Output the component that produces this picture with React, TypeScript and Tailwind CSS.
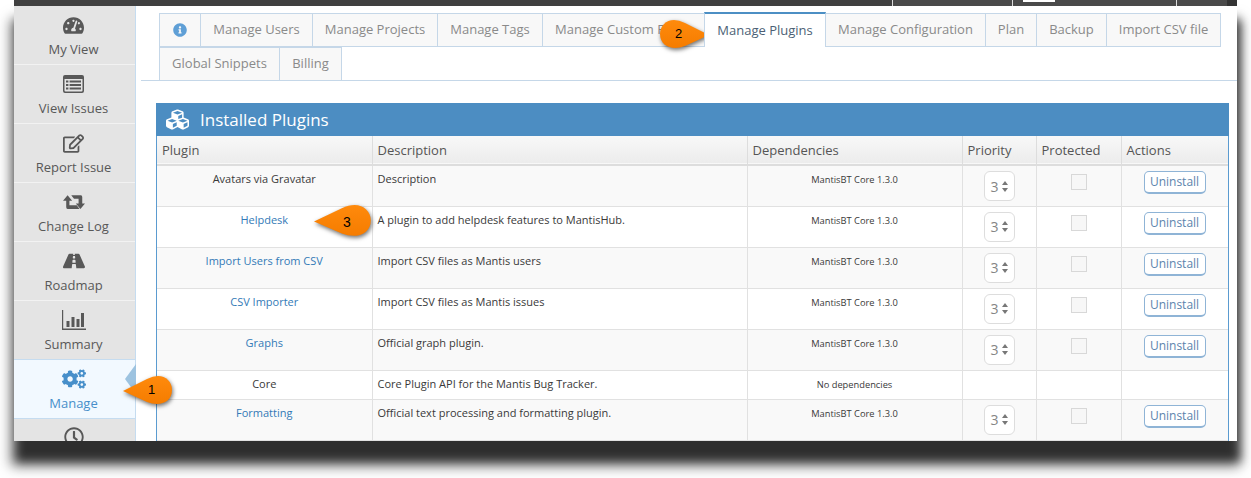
import { FaTachometerAlt, FaRegEdit, FaRoad, FaCogs, FaRegClock, FaInfoCircle, FaCubes } from "react-icons/fa";
import type { ReactNode } from "react";

const navItems: { label: string; icon: ReactNode; active?: boolean }[] = [
  { label: "My View", icon: <FaTachometerAlt className="w-[21px] h-[21px]" /> },
  {
    label: "View Issues",
    icon: (
      <svg viewBox="0 0 21 18" className="w-[21px] h-[18px]" fill="currentColor">
        <path
          fillRule="evenodd"
          d="M2 0h17a2 2 0 0 1 2 2v14a2 2 0 0 1-2 2H2a2 2 0 0 1-2-2V2a2 2 0 0 1 2-2zM1.5 4v11.5a1 1 0 0 0 1 1h16a1 1 0 0 0 1-1V4z"
        />
        <path d="M3 5.5h2.4v2H3zM6.6 5.5H18v2H6.6zM3 9h2.4v2H3zM6.6 9H18v2H6.6zM3 12.5h2.4v2H3zM6.6 12.5H18v2H6.6z" />
      </svg>
    ),
  },
  { label: "Report Issue", icon: <FaRegEdit className="w-[21px] h-[21px]" /> },
  {
    label: "Change Log",
    icon: (
      <svg viewBox="0 0 24 15" className="w-[22px] h-[14px]" fill="currentColor">
        <path d="M5 0l5 6H7v5h8l3 4H5q-1.500 0-1.500-2V6H0z" />
        <path d="M9 0h10.500Q21 0 21 2v7h3l-5 6-5-6h3V4h-5z" />
      </svg>
    ),
  },
  { label: "Roadmap", icon: <FaRoad className="w-[22px] h-[22px]" /> },
  {
    label: "Summary",
    icon: (
      <svg viewBox="0 0 24 20" className="w-[24px] h-[20px]" fill="currentColor">
        <path d="M0 0h1.2v18.6H24V20H0z" />
        <rect x="4.5" y="11" width="3" height="6" />
        <rect x="9.5" y="7" width="3" height="10" />
        <rect x="14.5" y="9" width="3" height="8" />
        <rect x="19" y="3" width="3" height="14" />
      </svg>
    ),
  },
  { label: "Manage", icon: <FaCogs className="w-[24px] h-[24px]" />, active: true },
];

const row1Tabs = ["Manage Users", "Manage Projects", "Manage Tags", "Manage Custom Fields"];
const row1After = ["Manage Configuration", "Plan", "Backup", "Import CSV file"];

const plugins = [
  { name: "Avatars via Gravatar", desc: "Description", deps: "MantisBT Core 1.3.0", link: false, h: "h-[41px]", ctrl: true },
  { name: "Helpdesk", desc: "A plugin to add helpdesk features to MantisHub.", deps: "MantisBT Core 1.3.0", link: true, h: "h-[41px]", ctrl: true },
  { name: "Import Users from CSV", desc: "Import CSV files as Mantis users", deps: "MantisBT Core 1.3.0", link: true, h: "h-[41px]", ctrl: true },
  { name: "CSV Importer", desc: "Import CSV files as Mantis issues", deps: "MantisBT Core 1.3.0", link: true, h: "h-[41px]", ctrl: true },
  { name: "Graphs", desc: "Official graph plugin.", deps: "MantisBT Core 1.3.0", link: true, h: "h-[41px]", ctrl: true },
  { name: "Core", desc: "Core Plugin API for the Mantis Bug Tracker.", deps: "No dependencies", link: false, h: "h-[29px]", ctrl: false },
  { name: "Formatting", desc: "Official text processing and formatting plugin.", deps: "MantisBT Core 1.3.0", link: true, h: "h-[41px]", ctrl: true },
];

function Tab({ children, className = "" }: { children: ReactNode; className?: string }) {
  return (
    <div className={`h-[34px] flex items-center justify-center border border-[#c5d7e8] -ml-px bg-[#f8f8f8] text-[#8a8a8a] text-[13px] ${className}`}>
      {children}
    </div>
  );
}

function Callout({ n, className, tail, numClass }: { n: number; className: string; tail: "left" | "right"; numClass: string }) {
  return (
    <div className={`absolute ${className}`}>
      <svg viewBox="0 0 50 30" preserveAspectRatio="none" className="w-full h-full overflow-visible drop-shadow-[1px_2px_2px_rgba(0,0,0,0.55)]">
        <defs>
          <linearGradient id={`orange${n}`} x1="0" y1="0" x2="0" y2="1">
            <stop offset="0" stopColor="#ff8a0c" />
            <stop offset="1" stopColor="#f57c00" />
          </linearGradient>
        </defs>
        {tail === "left" ? (
          <path d="M0 15 L24 3 Q30 0 35 0 C43 0 49 6 49 14 C49 23 42 28 34 28 Q29 28 24 26 Z" fill={`url(#orange${n})`} />
        ) : (
          <path d="M50 15 L26 3 Q20 0 15 0 C7 0 1 6 1 14 C1 23 8 28 16 28 Q21 28 26 26 Z" fill={`url(#orange${n})`} />
        )}
      </svg>
      <span className={`absolute text-black font-['Liberation_Sans',sans-serif] ${numClass}`}>{n}</span>
    </div>
  );
}

export default function App() {
  return (
    <div className="relative w-[1251px] h-[478px] bg-white overflow-hidden font-['Open_Sans',sans-serif]">
      <div className="ml-[14px] w-[1223px] h-[441px] flex flex-col bg-white shadow-[3px_20px_9px_rgba(0,0,0,0.6),0_22px_12px_3px_rgba(0,0,0,0.55)]">
        {/* top bar */}
        <div className="h-[6px] shrink-0 bg-[#404040] flex justify-end">
          <div className="w-[345px] h-[6px] flex bg-[#4a4a4a]">
            <div className="w-[120px] border-l border-[#dddddd]" />
            <div className="w-[164px] border-l border-[#dddddd] pl-[10px]">
              <div className="w-[32px] h-[2px] bg-white" />
            </div>
            <div className="w-[51px] border-l border-[#dddddd]" />
            <div className="flex-1 bg-[#333333]" />
          </div>
        </div>

        <div className="flex flex-1 min-h-0">
          {/* sidebar */}
          <div className="w-[122px] shrink-0 bg-[#e4e4e4] border-r border-[#c5dcf0] overflow-hidden">
            {navItems.map((item) => (
              <div
                key={item.label}
                className={`h-[59px] flex flex-col items-center pt-[7px] pr-[2px] border-b ${
                  item.active ? "bg-[#f2f9ff] text-[#478fca] border-y border-[#c5dcf0] -mt-px h-[60px]" : "text-[#585858] border-[#f2f2f2]"
                }`}
              >
                <div className="h-[24px] flex items-center justify-center">{item.icon}</div>
                <div className="mt-[2px] text-[13px] leading-[20px]">{item.label}</div>
              </div>
            ))}
            <div className="flex justify-center pt-[8px] pr-[2px] text-[#585858]">
              <FaRegClock className="w-[20px] h-[20px]" />
            </div>
          </div>

          {/* content */}
          <div className="relative flex-1 min-w-0 pt-[7px] overflow-hidden">
            <div className="relative h-[68px] ml-[5px] border-b border-[#c5d7e8]">
              <div className="flex pl-[18px]">
                <Tab className="w-[42px] ml-0 text-[#6fa7d6]">
                  <FaInfoCircle className="w-[14px] h-[14px] text-[#5f9fd6]" />
                </Tab>
                {row1Tabs.map((t, i) => (
                  <Tab key={t} className={["w-[113px]", "w-[126px]", "w-[106px]", "w-[163px]"][i]}>
                    <span className="whitespace-nowrap overflow-hidden">{t}</span>
                  </Tab>
                ))}
                <div className="relative -ml-px -mt-[1px] w-[122px] h-[35px] flex items-center justify-center bg-white border-x border-[#c5d7e8] border-t-2 border-t-[#4c8fc4] text-[#4c5f75] text-[13px] z-[1]">
                  Manage Plugins
                </div>
                {row1After.map((t, i) => (
                  <Tab key={t} className={["w-[161px]", "w-[52px]", "w-[71px]", "w-[115px]"][i]}>
                    <span className="whitespace-nowrap">{t}</span>
                  </Tab>
                ))}
              </div>
              <div className="flex pl-[18px]">
                <Tab className="w-[121px] ml-0">Global Snippets</Tab>
                <Tab className="w-[63px]">Billing</Tab>
              </div>
            </div>

            {/* installed plugins */}
            <div className="mt-[22px] ml-[20px] w-[1073px] border-x border-[#5b9bd0]">
              <div className="h-[33px] -mx-px bg-[#4c8dc2] flex items-center pl-[10px] text-white text-[17px]">
                <FaCubes className="w-[23px] h-[23px] mr-[11px]" />
                Installed Plugins
              </div>
              <table className="w-full table-fixed border-collapse text-[11px] text-[#393939]">
                <colgroup>
                  <col className="w-[215px]" />
                  <col className="w-[375px]" />
                  <col className="w-[215px]" />
                  <col className="w-[74px]" />
                  <col className="w-[85px]" />
                  <col />
                </colgroup>
                <thead>
                  <tr className="h-[29px] bg-gradient-to-b from-[#f8f8f8] to-[#ececec] border-b-2 border-[#dddddd] text-[#555555] text-[13px]">
                    {["Plugin", "Description", "Dependencies", "Priority", "Protected", "Actions"].map((h, i) => (
                      <th key={h} className={`font-normal text-left pl-[5px] pt-[2px] ${i < 5 ? "border-r border-[#dddddd]" : ""}`}>
                        {h}
                      </th>
                    ))}
                  </tr>
                </thead>
                <tbody>
                  {plugins.map((p, i) => (
                    <tr key={p.name} className={`${p.h} border-b border-[#e1e1e1] ${i % 2 === 0 ? "bg-[#f9f9f9]" : "bg-white"}`}>
                      <td className={`align-top text-center pt-[5px] border-r border-[#e1e1e1] ${p.link ? "text-[#337ab7]" : ""}`}>{p.name}</td>
                      <td className="align-top pl-[5px] pt-[5px] border-r border-[#e1e1e1]">{p.desc}</td>
                      <td className="align-top text-center pt-[6px] text-[9.3px] leading-[16px] border-r border-[#e1e1e1]">{p.deps}</td>
                      <td className="align-top border-r border-[#e1e1e1]">
                        {p.ctrl && (
                          <div className="ml-[21px] mt-[5px] w-[31px] h-[30px] flex items-center justify-center gap-[3px] bg-white border border-[#dddddd] rounded-[6px] text-[#858585] text-[14px]">
                            3
                            <svg viewBox="0 0 6 11" className="w-[6px] h-[11px]" fill="#777777">
                              <path d="M3 0l3 4H0zM3 11L0 7h6z" />
                            </svg>
                          </div>
                        )}
                      </td>
                      <td className="align-top border-r border-[#e1e1e1]">
                        {p.ctrl && <div className="ml-[34px] mt-[8px] w-[16px] h-[16px] bg-[#f7f7f7] border border-[#d8d8d8]" />}
                      </td>
                      <td className="align-top">
                        {p.ctrl && (
                          <div className="ml-[22px] mt-[5px] w-[62px] h-[23px] flex items-center justify-center bg-white border border-[#8fb4d6] border-b-2 rounded-[5px] text-[#5b84ad] text-[12px]">
                            Uninstall
                          </div>
                        )}
                      </td>
                    </tr>
                  ))}
                </tbody>
              </table>
            </div>
          </div>
        </div>
      </div>

      {/* active item notch */}
      <div className="absolute left-[125px] top-[364px] w-0 h-0 border-y-[15px] border-y-transparent border-r-[11px] border-r-[#9dc3e0]" />

      <Callout n={1} tail="left" className="left-[123px] top-[376px] w-[50px] h-[30px]" numClass="left-[25px] top-[6px] text-[13px] leading-[16px]" />
      <Callout n={2} tail="right" className="left-[659px] top-[20px] w-[50px] h-[30px]" numClass="left-[16px] top-[6px] text-[13px] leading-[16px]" />
      <Callout n={3} tail="left" className="left-[314px] top-[205px] w-[58px] h-[33px]" numClass="left-[29px] top-[8px] text-[14px] leading-[18px]" />
    </div>
  );
}
